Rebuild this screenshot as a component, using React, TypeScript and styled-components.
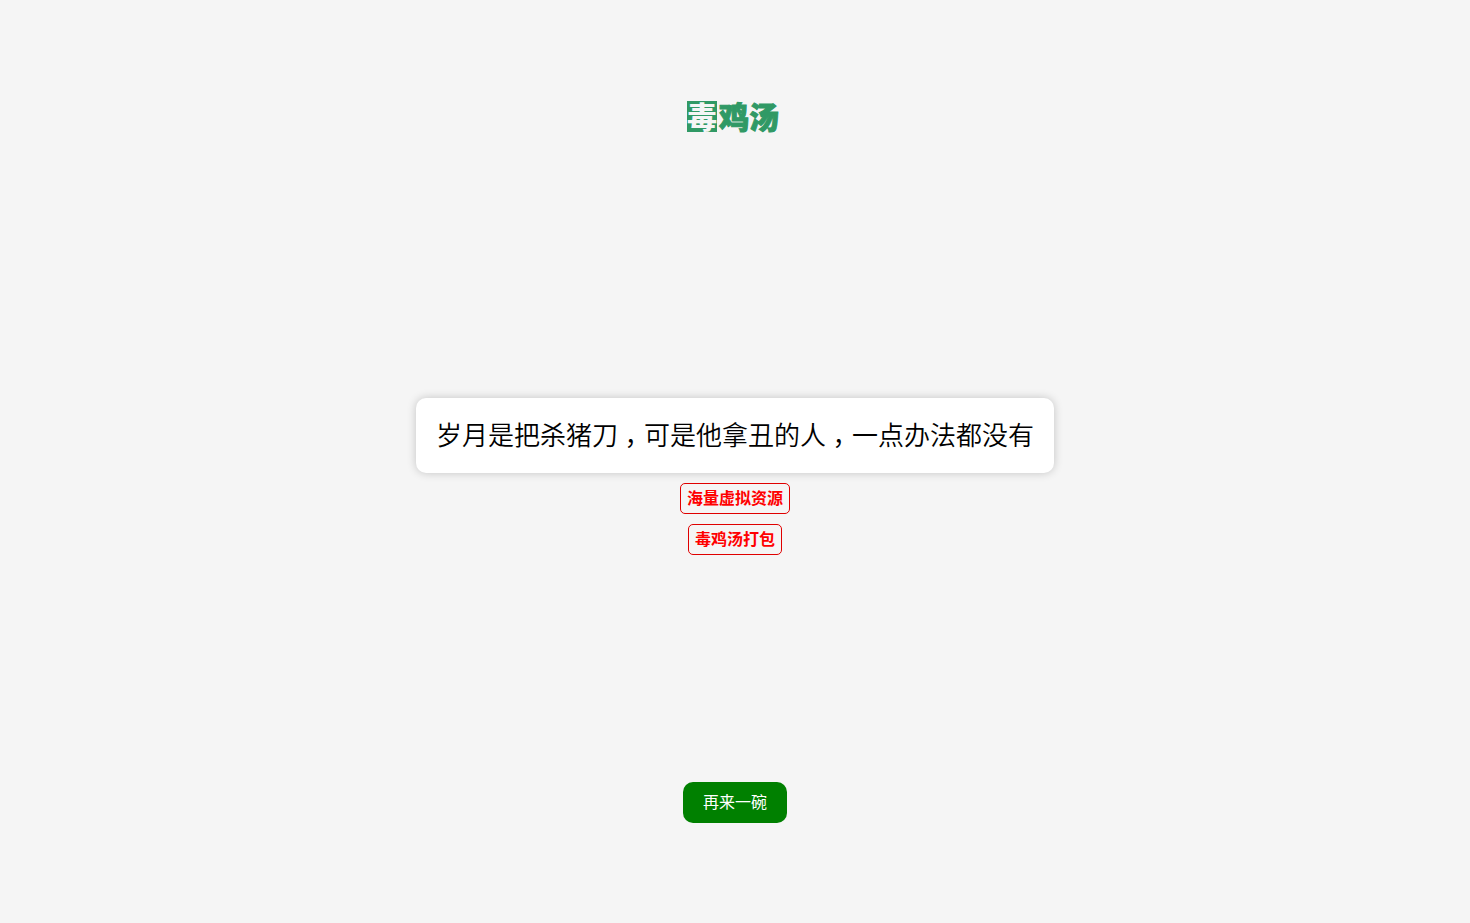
import React, { useState } from 'react';
import styled, { createGlobalStyle } from 'styled-components';

const GlobalStyle = createGlobalStyle`
  * {
    box-sizing: border-box;
  }

  body {
    margin: 0;
    background: #f5f5f5;
    color: #000;
    font-family: "Liberation Sans", "Noto Sans CJK SC", sans-serif;
    font-size: 16px;
    line-height: 21px;
  }
`;

const Page = styled.div`
  min-height: 100vh;
  padding: 100px 20px;
  display: flex;
  flex-direction: column;
  align-items: center;
  justify-content: space-between;
`;

const Header = styled.header`
  min-height: 71px;
  padding-right: 4px;
`;

const Logo = styled.h1`
  margin: 0;
  padding-top: 1px;
  display: flex;
  gap: 2px;
  color: #309965;
  font-family: "Noto Sans CJK SC", sans-serif;
  font-size: 30px;
  font-weight: 900;
  line-height: 29px;
`;

const LogoSeal = styled.span`
  height: 31px;
  background: #309965;
  color: #f5f5f5;
`;

const LogoName = styled.span`
  -webkit-text-stroke: 1px currentColor;
`;

const Main = styled.main`
  display: flex;
  flex-direction: column;
  align-items: center;
  gap: 10px;
`;

const Quote = styled.p`
  margin: 0;
  padding: 21px 20px 19px;
  border-radius: 10px;
  background: #fff;
  box-shadow: 0 0 10px rgba(0, 0, 0, 0.2);
  font-size: 26px;
  font-weight: 350;
  line-height: 35px;
  text-align: center;
`;

/* Full-width comma centred in its one-em cell. */
const Comma = styled.span`
  display: inline-block;
  width: 1em;
  text-align: center;
  font-feature-settings: "halt";
`;

const PromoLink = styled.a`
  padding: 4px 6px;
  border: 1px solid #e00000;
  border-radius: 5px;
  color: #f00;
  font-weight: 700;
  text-decoration: none;
`;

const MoreButton = styled.button`
  padding: 10px 20px;
  border: 0;
  border-radius: 10px;
  background: #008000;
  color: #fff;
  font: inherit;
  cursor: pointer;
`;

const quotes = ['岁月是把杀猪刀，可是他拿丑的人，一点办法都没有'];

export default function App() {
  const [index, setIndex] = useState(0);

  return (
    <Page lang="zh-CN">
      <GlobalStyle />
      <Header>
        <Logo>
          <LogoSeal>毒</LogoSeal>
          <LogoName>鸡汤</LogoName>
        </Logo>
      </Header>
      <Main>
        <Quote>
          {quotes[index].split('，').map((clause, i) => (
            <React.Fragment key={i}>
              {i > 0 && <Comma>，</Comma>}
              {clause}
            </React.Fragment>
          ))}
        </Quote>
        <PromoLink href="#resources">海量虚拟资源</PromoLink>
        <PromoLink href="#bundle">毒鸡汤打包</PromoLink>
      </Main>
      <MoreButton type="button" onClick={() => setIndex((index + 1) % quotes.length)}>
        再来一碗
      </MoreButton>
    </Page>
  );
}
